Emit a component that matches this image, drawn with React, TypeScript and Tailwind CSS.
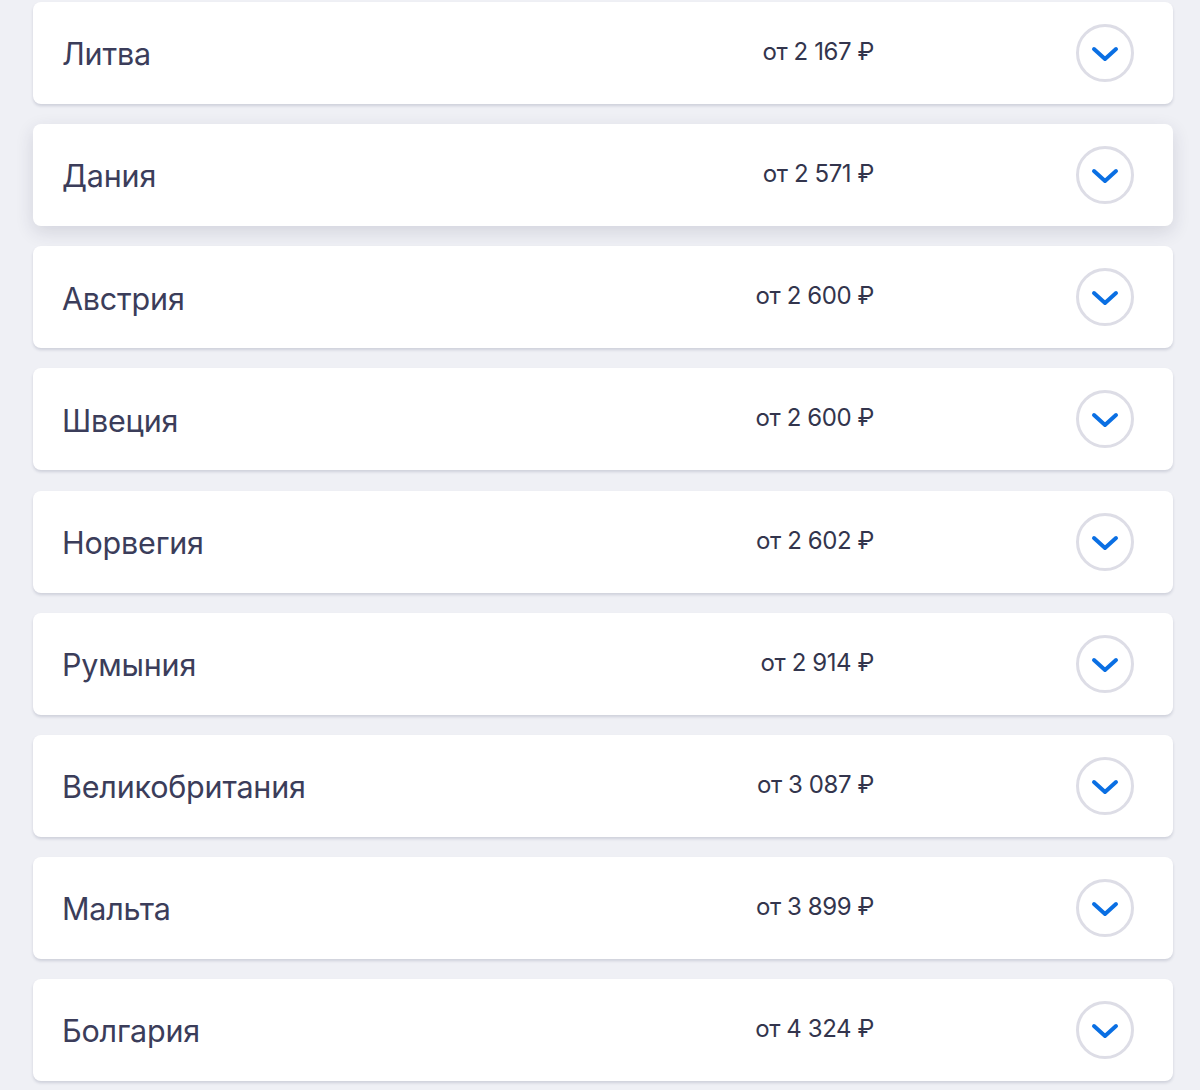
import React from "react";

type Country = { name: string; price: string };

const countries: Country[] = [
  { name: "Литва", price: "2 167" },
  { name: "Дания", price: "2 571" },
  { name: "Австрия", price: "2 600" },
  { name: "Швеция", price: "2 600" },
  { name: "Норвегия", price: "2 602" },
  { name: "Румыния", price: "2 914" },
  { name: "Великобритания", price: "3 087" },
  { name: "Мальта", price: "3 899" },
  { name: "Болгария", price: "4 324" },
];

function Chevron() {
  return (
    <svg width="28" height="16" viewBox="0 0 28 16" fill="none">
      <path
        d="M3 3 L14 13 L25 3"
        stroke="#0a6fe3"
        strokeWidth="4"
        strokeLinecap="round"
        strokeLinejoin="round"
      />
    </svg>
  );
}

function Row({ item, raised }: { item: Country; raised: boolean }) {
  return (
    <div
      className={
        raised
          ? "flex h-[102px] items-center rounded-[8px] bg-white pl-[29px] pr-[39px] shadow-[0_6px_18px_rgba(40,44,80,0.14)]"
          : "flex h-[102px] items-center rounded-[8px] bg-white pl-[29px] pr-[39px] shadow-[0_2px_3px_rgba(40,44,80,0.16)]"
      }
    >
      <div className="flex-1 pt-[3px] text-[30.5px] leading-none text-[#3b3d5a] tracking-[-0.2px]">
        {item.name}
      </div>
      <div className="mb-[2px] w-[260px] text-right text-[24px] leading-none tracking-[-0.4px] text-[#33354d]">
        от {item.price} ₽
      </div>
      <div className="ml-[202px] flex h-[58px] w-[58px] items-center justify-center rounded-full border-[3px] border-[#dddde6] pt-[2px]">
        <Chevron />
      </div>
    </div>
  );
}

export default function App() {
  return (
    <div
      className="min-h-[1090px] w-[1200px] bg-[#eff0f5] pl-[33px] pr-[27px] pt-[2px]"
      style={{ fontFamily: "Inter, 'Noto Sans', sans-serif" }}
    >
      <div className="flex flex-col gap-[20.125px]">
        {countries.map((c, i) => (
          <Row key={c.name} item={c} raised={i === 1} />
        ))}
      </div>
    </div>
  );
}
